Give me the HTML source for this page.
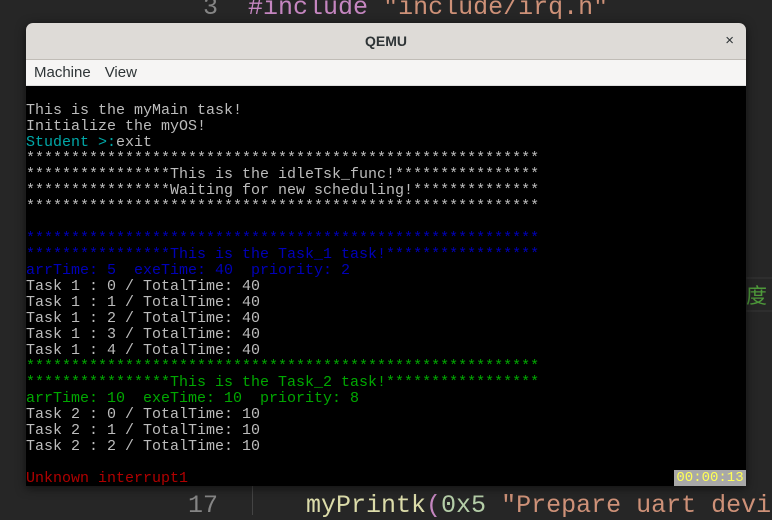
<!DOCTYPE html>
<html><head><meta charset="utf-8"><style>
body{margin:0;width:772px;height:515px;background:#262626;position:relative;overflow:hidden;font-family:"Liberation Sans",sans-serif}
.code{position:absolute;font-family:"Liberation Mono",monospace;font-size:25px;white-space:pre;color:#ce9178}
.win{position:absolute;left:26px;top:23px;width:720px;height:463px;background:#000;border-radius:7px 7px 0 0;overflow:hidden;box-shadow:0 2px 10px rgba(0,0,0,.6)}
.title{height:36px;background:#dedbd7;border-bottom:1px solid #c0bcb6;text-align:center;line-height:36px;font-size:14px;font-weight:bold;color:#2e3436;position:relative}
.title .x{position:absolute;right:12px;top:0;font-weight:normal;font-size:15px}
.menu{height:25px;background:#f6f5f4;font-size:15px;color:#2e3436;line-height:25px;padding-left:8px;border-bottom:1px solid #ddd}
.menu span{margin-right:14px}
.term{position:absolute;left:0;font-family:"Liberation Mono",monospace;font-size:15px;line-height:16px;white-space:pre;color:#bcbcbc}
.c{color:#00a8a8}.b{color:#0000b8}.g{color:#00a800}.r{color:#b00000}
.clock{position:absolute;right:0;bottom:0;width:72px;height:16px;background:#a8a8a8;color:#ffff55;font-family:"Liberation Mono",monospace;font-size:14px;line-height:16px;text-align:center}
</style></head><body>
<div class="code" style="left:203px;top:-7px"><span style="color:#858585">3</span>  <span style="color:#c586c0">#include</span> "include/irq.h"</div>
<div class="code" style="left:188px;top:491px"><span style="color:#858585">17</span></div>
<div class="code" style="left:306px;top:491px"><span style="color:#dcdcaa">myPrintk</span><span style="color:#c586c0">(</span><span style="color:#b5cea8">0x5</span> "Prepare uart devic</div>
<div style="position:absolute;left:252px;top:486px;width:1px;height:29px;background:#444"></div>
<div style="position:absolute;left:746px;top:277px;width:26px;height:2px;background:#2e2e2e"></div>
<div style="position:absolute;left:746px;top:310px;width:26px;height:2px;background:#2e2e2e"></div>
<div style="position:absolute;left:746px;top:281px;font-family:'Noto Sans CJK SC',sans-serif;font-size:21px;color:#4e9a3a;line-height:28px">度</div>
<div class="win">
<div class="title">QEMU<span class="x">×</span></div>
<div class="menu"><span>Machine</span><span>View</span></div>
<div class="term" style="top:80px">This is the myMain task!
Initialize the myOS!
<span class="c">Student &gt;:</span>exit
*********************************************************
****************This is the idleTsk_func!****************
****************Waiting for new scheduling!**************
*********************************************************

<span class="b">*********************************************************
****************This is the Task_1 task!*****************
arrTime: 5  exeTime: 40  priority: 2</span>
Task 1 : 0 / TotalTime: 40
Task 1 : 1 / TotalTime: 40
Task 1 : 2 / TotalTime: 40
Task 1 : 3 / TotalTime: 40
Task 1 : 4 / TotalTime: 40
<span class="g">*********************************************************
****************This is the Task_2 task!*****************
arrTime: 10  exeTime: 10  priority: 8</span>
Task 2 : 0 / TotalTime: 10
Task 2 : 1 / TotalTime: 10
Task 2 : 2 / TotalTime: 10

<span class="r">Unknown interrupt1</span></div>
<div class="clock">00:00:13</div>
</div>
</body></html>
